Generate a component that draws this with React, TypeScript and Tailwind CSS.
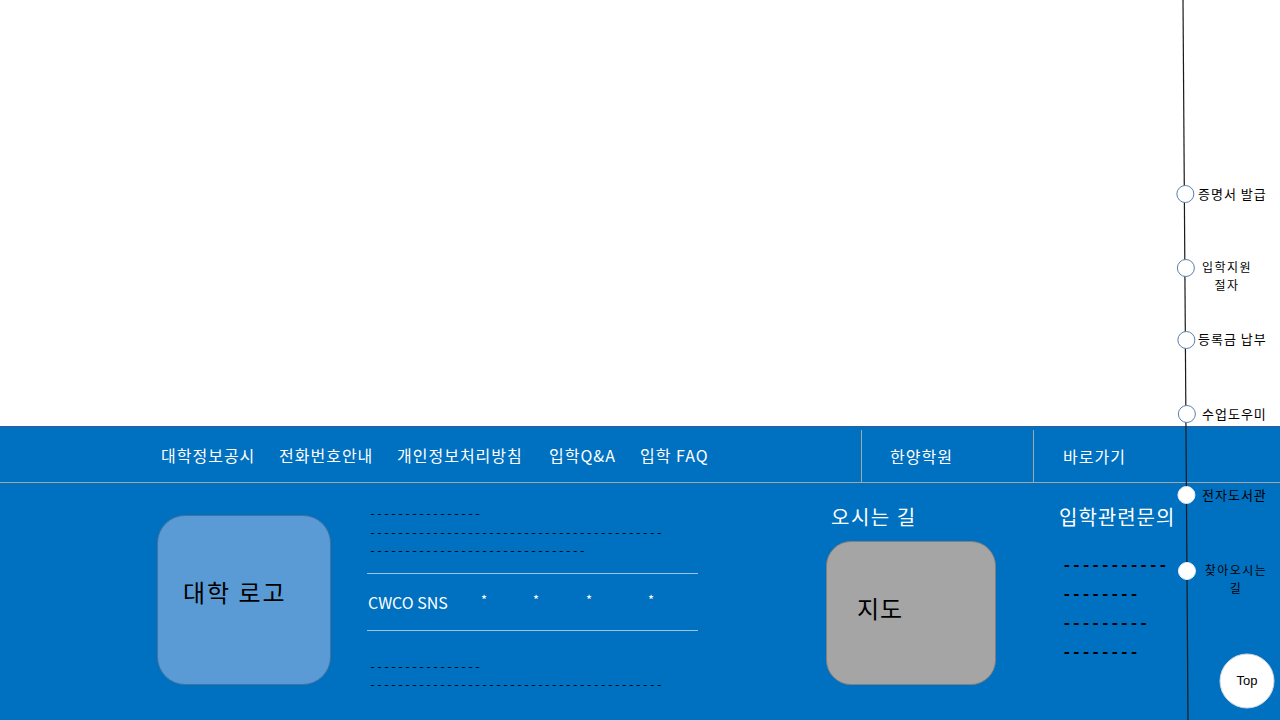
const font = "font-['Noto_Sans_CJK_KR',sans-serif]"
const mono = "font-['Liberation_Mono',monospace]"

// widths taken so each link starts where the mockup puts it
const navItems = [
  { label: '대학정보공시', w: 'w-[118px]' },
  { label: '전화번호안내', w: 'w-[118px]' },
  { label: '개인정보처리방침', w: 'w-[152px]' },
  { label: '입학Q&A', w: 'w-[91px]' },
  { label: '입학 FAQ', w: 'w-[90px]' },
]

const Dashes = ({ n }: { n: number }) => (
  <div className={`${mono} text-[11.67px] leading-[18.5px] text-black whitespace-pre`}>{'-'.repeat(n)}</div>
)

const BigDashes = ({ n }: { n: number }) => (
  <div className={`${mono} font-bold text-[16px] leading-[29px] text-black whitespace-pre`}>{'-'.repeat(n)}</div>
)

const Timeline = () => {
  // hollow nodes on the white area, filled ones on the blue footer
  const hollow = [194, 268, 340, 414]
  const filled = [495, 571]
  const xAt = (y: number) => 1183 + (5 * y) / 720

  return (
    <div className="absolute inset-0 pointer-events-none">
      <svg width="1280" height="720" className="absolute inset-0">
        <line x1="1183" y1="0" x2="1188" y2="720" stroke="#1a1a1a" strokeWidth="1.2" />
        {hollow.map((y) => (
          <circle key={y} cx={xAt(y) + 1} cy={y} r="8.5" fill="#ffffff" stroke="#5b80ad" strokeWidth="1" />
        ))}
        {filled.map((y) => (
          <circle key={y} cx={xAt(y)} cy={y} r="8.5" fill="#ffffff" stroke="#e8eef6" strokeWidth="1" />
        ))}
        <circle cx="1247" cy="681" r="27" fill="#ffffff" stroke="#d0d7df" strokeWidth="1" />
      </svg>

      <div className="absolute left-[1198px] top-[186px] text-[13px] leading-[16px] tracking-[1px] text-black">증명서 발급</div>
      <div className="absolute left-[1199px] top-[258px] w-[56px] text-center text-[12px] leading-[17.5px] tracking-[1.5px] text-black">
        <div>입학지원</div>
        <div>절자</div>
      </div>
      <div className="absolute left-[1198px] top-[331px] text-[13px] leading-[16px] tracking-[1px] text-black">등록금 납부</div>
      <div className="absolute left-[1202px] top-[406px] text-[13px] leading-[16px] tracking-[1px] text-black">수업도우미</div>
      <div className="absolute left-[1202px] top-[487px] text-[13px] leading-[16px] tracking-[1px] text-black">전자도서관</div>
      <div className="absolute left-[1202px] top-[561px] w-[68px] text-center text-[12px] leading-[17.5px] tracking-[1.5px] text-black">
        <div>찾아오시는</div>
        <div>길</div>
      </div>
      <div className="absolute left-[1220px] top-[654px] w-[54px] h-[54px] flex items-center justify-center text-[13px] text-black font-['Liberation_Sans',sans-serif]">
        Top
      </div>
    </div>
  )
}

export default function App() {
  return (
    <div className={`relative w-[1280px] h-[720px] overflow-hidden bg-white ${font}`}>
      <div className="h-[426px]" />

      <footer className="h-[294px] bg-[#0070c0] border-t border-[#2f5f95]">
        {/* nav row */}
        <div className="flex h-[56px] border-b border-[#a6a6a6]">
          <div className="flex w-[861px] items-center pl-[161px] text-[16px] tracking-[1px] text-white">
            {navItems.map((item) => (
              <span key={item.label} className={`${item.w} whitespace-nowrap`}>
                {item.label}
              </span>
            ))}
          </div>
          <div className="mt-[3px] flex w-[172px] items-center border-l border-[#a6a6a6] pl-[28px] text-[16px] tracking-[1px] text-white">
            한양학원
          </div>
          <div className="mt-[3px] flex flex-1 items-center border-l border-[#a6a6a6] pl-[29px] text-[16px] tracking-[1px] text-white">
            바로가기
          </div>
        </div>

        {/* body */}
        <div className="flex pl-[157px]">
          <div className="mt-[32px] flex h-[170px] w-[174px] items-center rounded-[28px] border border-[#41719c] bg-[#5b9bd5] pb-[16px] pl-[25px] text-[24px] tracking-[2px] text-black">
            대학 로고
          </div>

          <div className="ml-[36px] w-[331px] pt-[22px]">
            <div className="pl-[2px]">
              <Dashes n={16} />
              <Dashes n={42} />
              <Dashes n={31} />
            </div>
            <div className="mt-[12px] flex h-[58px] items-center border-y border-[#9dc3e6] pl-[1px] text-white">
              <span className="w-[110px] text-[16px]">CWCO SNS</span>
              <span className="w-[12px] -mt-[4px] text-center text-[13px]">*</span>
              <span className="ml-[40px] w-[12px] -mt-[4px] text-center text-[13px]">*</span>
              <span className="ml-[41px] w-[12px] -mt-[4px] text-center text-[13px]">*</span>
              <span className="ml-[50px] w-[12px] -mt-[4px] text-center text-[13px]">*</span>
            </div>
            <div className="mt-[27px] pl-[2px]">
              <Dashes n={16} />
              <Dashes n={42} />
            </div>
          </div>

          <div className="ml-[128px] pt-[20px]">
            <div className="pl-[5px] text-[20px] leading-[28px] tracking-[1.5px] text-white">오시는 길</div>
            <div className="mt-[10px] flex h-[144px] w-[170px] items-center rounded-[25px] border border-[#7f7f7f] bg-[#a5a5a5] pb-[10px] pl-[30px] text-[24px] tracking-[1px] text-black">
              지도
            </div>
          </div>

          <div className="ml-[63px] pt-[20px]">
            <div className="text-[20px] leading-[28px] tracking-[1px] text-white whitespace-nowrap">입학관련문의</div>
            <div className="mt-[21px] pl-[3px]">
              <BigDashes n={11} />
              <BigDashes n={8} />
              <BigDashes n={9} />
              <BigDashes n={8} />
            </div>
          </div>
        </div>
      </footer>

      <Timeline />
    </div>
  )
}
